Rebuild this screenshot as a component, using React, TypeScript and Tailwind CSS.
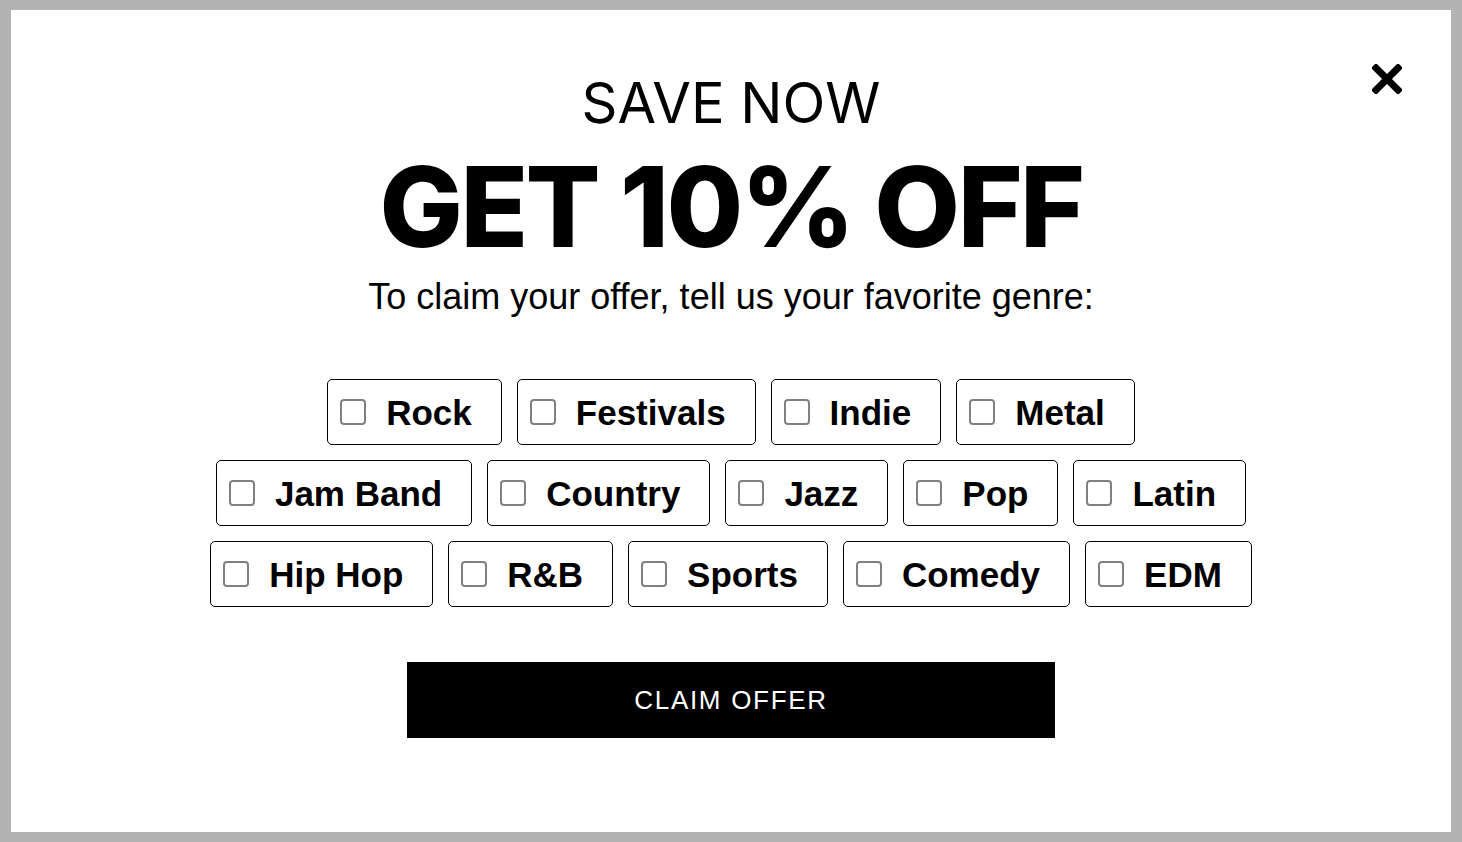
import React from 'react';

const rows: string[][] = [
  ['Rock', 'Festivals', 'Indie', 'Metal'],
  ['Jam Band', 'Country', 'Jazz', 'Pop', 'Latin'],
  ['Hip Hop', 'R&B', 'Sports', 'Comedy', 'EDM'],
];

const GenreChip = ({ label }: { label: string }) => {
  const [checked, setChecked] = React.useState(false);
  return (
    <label className="flex h-[66px] cursor-pointer items-center rounded-[5px] border border-black pl-[12px] pr-[29px]">
      <span
        onClick={() => setChecked(!checked)}
        className={`flex h-[26px] w-[26px] items-center justify-center rounded-[4px] border-2 border-[#808080] ${checked ? 'bg-black' : 'bg-white'}`}
      />
      <span className="ml-[20px] text-[35px] font-bold leading-none text-black">{label}</span>
    </label>
  );
};

export default function App() {
  return (
    <div className="flex h-[842px] w-full bg-[#b3b3b3] px-[11px] py-[10px] font-['Liberation_Sans',Arial,sans-serif]">
      <div className="relative flex flex-1 flex-col items-center bg-white">
        <button className="absolute right-[39px] top-[44px] p-[10px]" aria-label="Close">
          <svg width="30" height="30" viewBox="0 0 30 30">
            <path d="M4 4 L26 26 M26 4 L4 26" stroke="black" strokeWidth="7" strokeLinecap="square" />
          </svg>
        </button>

        <h2 className="mt-[61px] font-['Inter',sans-serif] text-[56px] font-normal leading-[64px] text-black">
          SAVE NOW
        </h2>
        <h1 className="mt-[17px] font-['Inter',sans-serif] text-[111px] font-extrabold leading-[110px] tracking-[-2.5px] text-black">
          GET 10% OFF
        </h1>
        <p className="mt-[15px] text-[36px] leading-[40px] text-black">
          To claim your offer, tell us your favorite genre:
        </p>

        <div className="mt-[62px] flex flex-col items-center gap-[15px]">
          {rows.map((row, i) => (
            <div key={i} className="flex gap-[15px]">
              {row.map((g) => (
                <GenreChip key={g} label={g} />
              ))}
            </div>
          ))}
        </div>

        <button className="mt-[55px] h-[76px] w-[648px] bg-black text-[26px] tracking-[1.7px] text-white">
          CLAIM OFFER
        </button>
      </div>
    </div>
  );
}
